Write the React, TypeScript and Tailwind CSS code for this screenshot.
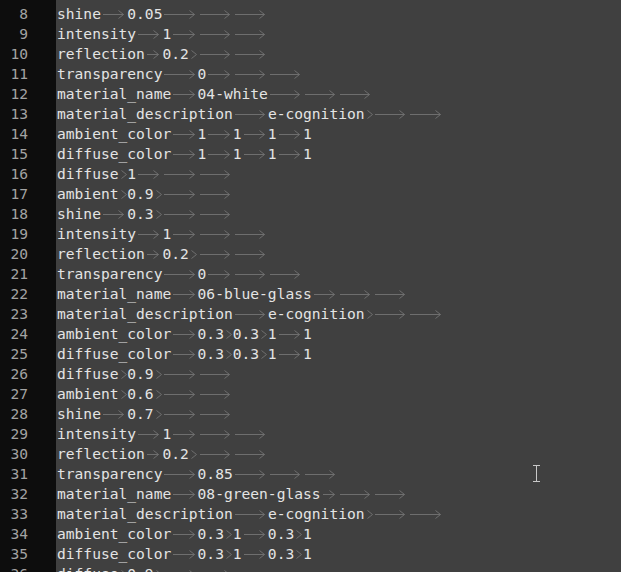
const lines: [number, string][] = [
  [8, "shine\t0.05\t\t\t"],
  [9, "intensity\t1\t\t\t"],
  [10, "reflection\t0.2\t\t\t"],
  [11, "transparency\t0\t\t\t"],
  [12, "material_name\t04-white\t\t\t"],
  [13, "material_description\te-cognition\t\t\t"],
  [14, "ambient_color\t1\t1\t1\t1"],
  [15, "diffuse_color\t1\t1\t1\t1"],
  [16, "diffuse\t1\t\t\t"],
  [17, "ambient\t0.9\t\t\t"],
  [18, "shine\t0.3\t\t\t"],
  [19, "intensity\t1\t\t\t"],
  [20, "reflection\t0.2\t\t\t"],
  [21, "transparency\t0\t\t\t"],
  [22, "material_name\t06-blue-glass\t\t\t"],
  [23, "material_description\te-cognition\t\t\t"],
  [24, "ambient_color\t0.3\t0.3\t1\t1"],
  [25, "diffuse_color\t0.3\t0.3\t1\t1"],
  [26, "diffuse\t0.9\t\t\t"],
  [27, "ambient\t0.6\t\t\t"],
  [28, "shine\t0.7\t\t\t"],
  [29, "intensity\t1\t\t\t"],
  [30, "reflection\t0.2\t\t\t"],
  [31, "transparency\t0.85\t\t\t"],
  [32, "material_name\t08-green-glass\t\t\t"],
  [33, "material_description\te-cognition\t\t\t"],
  [34, "ambient_color\t0.3\t1\t0.3\t1"],
  [35, "diffuse_color\t0.3\t1\t0.3\t1"],
  [36, "diffuse\t0.9\t\t\t"],
];

const tabWidths: Record<number, string> = {
  1: "w-[1ch]",
  2: "w-[2ch]",
  3: "w-[3ch]",
  4: "w-[4ch]",
};

// visible tab: thin line ending in a chevron
const Tab = ({ size }: { size: number }) => (
  <span className={`inline-flex h-5 items-center align-top ${tabWidths[size]}`}>
    <span className="ml-[2px] h-px flex-1 bg-[#6e6e6e]" />
    <svg width="6" height="9" viewBox="0 0 6 9" className="mr-[3px] shrink-0">
      {size > 1 && <path d="M0 4.5H5.5" stroke="#6e6e6e" strokeWidth="1" />}
      <path d="M0.5 0.5L5.5 4.5L0.5 8.5" fill="none" stroke="#6e6e6e" strokeWidth="1" />
    </svg>
  </span>
);

const Line = ({ text }: { text: string }) => {
  let col = 0;
  const parts = text.split("\t");
  return (
    <div className="h-5 whitespace-pre leading-5">
      {parts.map((p, i) => {
        col += p.length;
        let tab = null;
        if (i < parts.length - 1) {
          const size = 4 - (col % 4);
          col += size;
          tab = <Tab size={size} />;
        }
        return (
          <span key={i}>
            <span>{p}</span>
            {tab}
          </span>
        );
      })}
    </div>
  );
};

export default function App() {
  return (
    <div className="relative flex h-[572px] w-[621px] overflow-hidden bg-[#404040] font-['DejaVu_Sans_Mono',monospace] text-[14.6px]">
      <div className="w-[56px] shrink-0 bg-[#0d0d0d] pt-1">
        {lines.map(([n]) => (
          <div key={n} className="h-5 w-[28px] text-right leading-5 text-[#a3a3a3]">
            {n}
          </div>
        ))}
      </div>
      <div className="flex-1 pt-1 pl-px text-[#e4e4e4]">
        {lines.map(([n, t]) => (
          <Line key={n} text={t} />
        ))}
      </div>
      {/* mouse text cursor */}
      <svg width="8" height="17" viewBox="0 0 8 17" className="absolute left-[533px] top-[465px]">
        <path d="M0 0.5H7M0 16.5H7M3.5 0.5V16.5" stroke="#c8c8c8" strokeWidth="1" fill="none" />
      </svg>
    </div>
  );
}
